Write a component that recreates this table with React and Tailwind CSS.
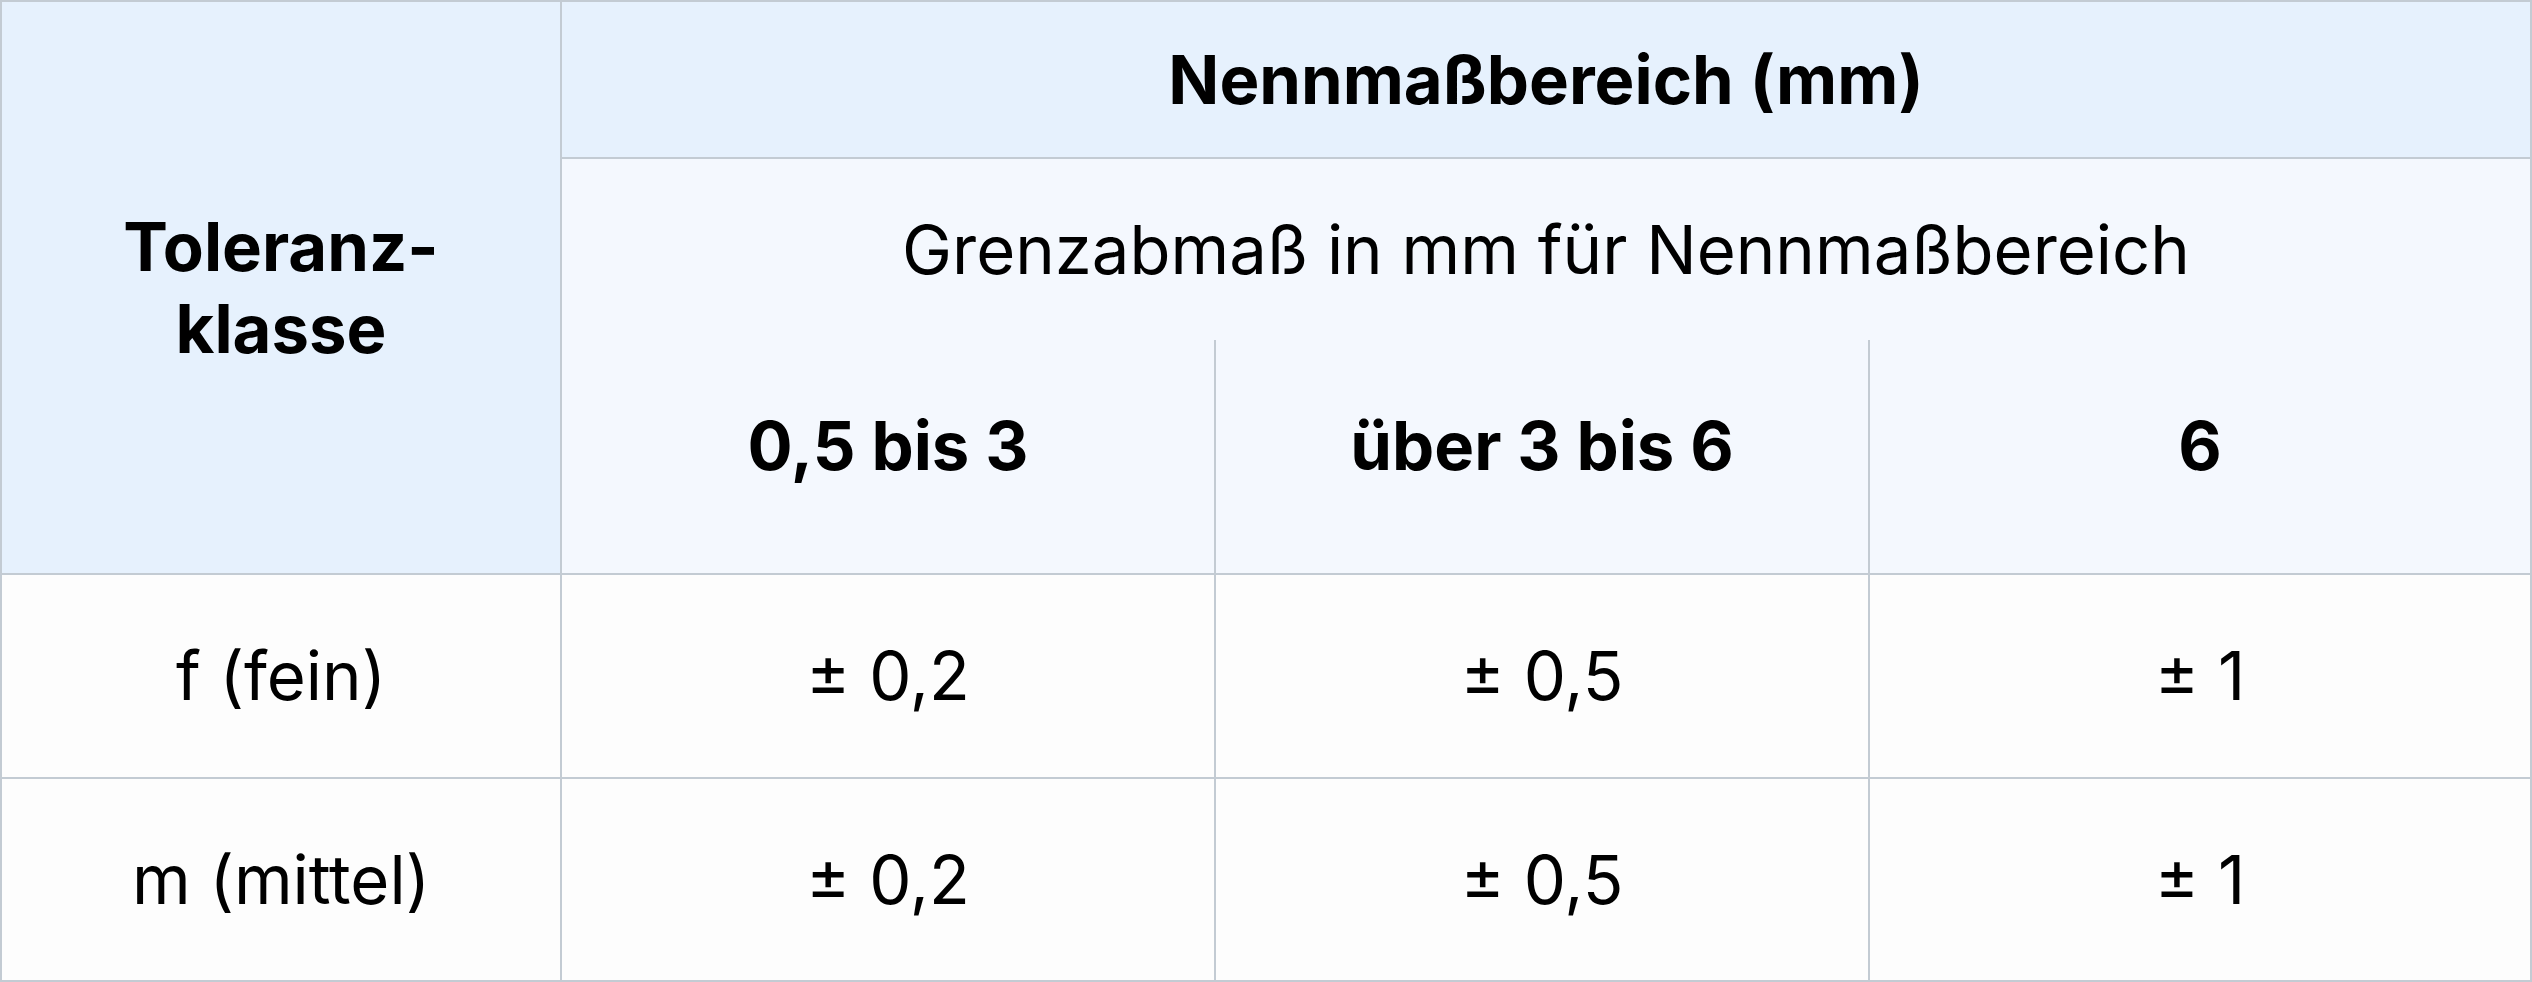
import React from "react";

const rows = [
  { label: "f (fein)", values: ["± 0,2", "± 0,5", "± 1"] },
  { label: "m (mittel)", values: ["± 0,2", "± 0,5", "± 1"] },
];

const ranges = ["0,5 bis 3", "über 3 bis 6", "6"];

export default function App() {
  return (
    <div
      className="w-[2532px] h-[982px] bg-white text-black text-[67px] leading-[82px]"
      style={{ fontFamily: "Inter, 'Noto Sans', sans-serif" }}
    >
      <div className="w-full h-full border-2 border-[#c3cbd3] grid grid-cols-[560px_652px_654px_1fr] grid-rows-[157px_181px_235px_204px_1fr]">
        {/* first column header */}
        <div className="row-span-3 bg-[#e6f1fd] border-r-2 border-b-2 border-[#c3cbd3] flex items-center justify-center text-center font-bold">
          Toleranz-
          <br />
          klasse
        </div>
        <div className="col-span-3 bg-[#e6f1fd] border-b-2 border-[#c3cbd3] flex items-center justify-center font-bold">
          Nennmaßbereich (mm)
        </div>
        <div className="col-span-3 bg-[#f4f8fe] flex items-center justify-center">
          Grenzabmaß in mm für Nennmaßbereich
        </div>
        {ranges.map((r, i) => (
          <div
            key={r}
            className={`bg-[#f4f8fe] border-b-2 border-[#c3cbd3] flex items-center justify-center pb-[22px] font-bold ${
              i > 0 ? "border-l-2" : ""
            }`}
          >
            {r}
          </div>
        ))}

        {rows.map((row, ri) => (
          <React.Fragment key={row.label}>
            <div
              className={`bg-[#fdfdfd] border-r-2 border-[#c3cbd3] flex items-center justify-center ${
                ri === 0 ? "border-b-2" : ""
              }`}
            >
              {row.label}
            </div>
            {row.values.map((v, i) => (
              <div
                key={i}
                className={`bg-[#fdfdfd] border-[#c3cbd3] flex items-center justify-center ${
                  ri === 0 ? "border-b-2" : ""
                } ${i > 0 ? "border-l-2" : ""}`}
              >
                {v}
              </div>
            ))}
          </React.Fragment>
        ))}
      </div>
    </div>
  );
}
